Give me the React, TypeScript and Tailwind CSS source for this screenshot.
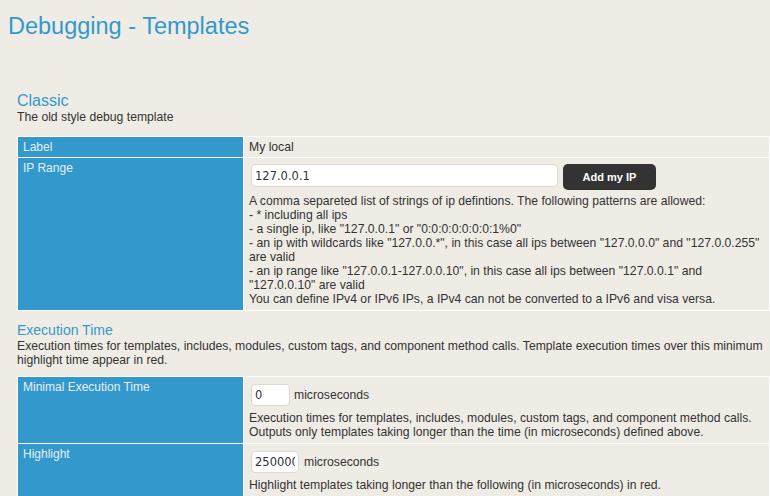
import React from "react";

const leftCell =
  "align-top bg-[#3399cc] text-[#e4f0f7] px-[5px] py-[3px] text-[12px] leading-[14px] font-normal text-left";
const rightCell =
  "align-top bg-[#efece6] px-[5px] py-[3px] text-[12.2px] leading-[14px] text-[#333]";
const inputCls =
  "block bg-white border border-[#dcd9d3] rounded-[4px] px-[3px] text-[11.5px] text-[#333] font-['DejaVu_Sans',sans-serif] outline-none";

export default function App() {
  return (
    <div className="w-[770px] h-[496px] overflow-hidden bg-[#efece6] font-['Liberation_Sans',Arial,sans-serif] text-[#333]">
      <h1 className="pt-[12px] pl-[8px] text-[23.5px] leading-[28px] text-[#3399cc]">
        Debugging - Templates
      </h1>
      <div className="pl-[17px] mt-[52px]">
        <h2 className="text-[16px] leading-[18px] text-[#3399cc]">Classic</h2>
        <p className="text-[12.2px] leading-[14px]">The old style debug template</p>
        <table className="mt-[12px] w-[753px] table-fixed border-separate border-spacing-[1px] bg-white">
          <colgroup>
            <col className="w-[225px]" />
            <col />
          </colgroup>
          <tbody>
            <tr>
              <th className={leftCell}>Label</th>
              <td className={rightCell}>My local</td>
            </tr>
            <tr>
              <th className={leftCell}>IP Range</th>
              <td className={rightCell + " pb-[4px]"}>
                <div className="flex items-start mt-[3px] ml-[2px]">
                  <input
                    className={inputCls + " w-[307px] h-[23px]"}
                    defaultValue="127.0.0.1"
                  />
                  <button className="ml-[5px] w-[93px] h-[26px] rounded-[5px] bg-[#333] text-white font-bold text-[11px]">
                    Add my IP
                  </button>
                </div>
                <div className="mt-[4px]">
                  A comma separeted list of strings of ip defintions. The following patterns are allowed:
                  <br />- * including all ips
                  <br />- a single ip, like "127.0.0.1" or "0:0:0:0:0:0:0:1%0"
                  <br />- an ip with wildcards like "127.0.0.*", in this case all ips between "127.0.0.0" and "127.0.0.255" are valid
                  <br />- an ip range like "127.0.0.1-127.0.0.10", in this case all ips between "127.0.0.1" and "127.0.0.10" are valid
                  <br />You can define IPv4 or IPv6 IPs, a IPv4 can not be converted to a IPv6 and visa versa.
                </div>
              </td>
            </tr>
          </tbody>
        </table>

        <h2 className="mt-[10px] text-[14px] leading-[18px] text-[#3399cc]">Execution Time</h2>
        <p className="text-[12.2px] leading-[14px] w-[753px]">
          Execution times for templates, includes, modules, custom tags, and component method calls. Template execution times over this minimum highlight time appear in red.
        </p>
        <table className="mt-[9px] w-[753px] table-fixed border-separate border-spacing-[1px] bg-white">
          <colgroup>
            <col className="w-[225px]" />
            <col />
          </colgroup>
          <tbody>
            <tr>
              <th className={leftCell}>Minimal Execution Time</th>
              <td className={rightCell + " pb-[4px]"}>
                <div className="flex items-center mt-[4px] ml-[2px]">
                  <input className={inputCls + " w-[39px] h-[22px]"} defaultValue="0" />
                  <span className="ml-[4px]">microseconds</span>
                </div>
                <div className="mt-[5px]">
                  Execution times for templates, includes, modules, custom tags, and component method calls.
                  <br />
                  Outputs only templates taking longer than the time (in microseconds) defined above.
                </div>
              </td>
            </tr>
            <tr>
              <th className={leftCell}>Highlight</th>
              <td className={rightCell + " pb-[4px]"}>
                <div className="flex items-center mt-[4px] ml-[2px]">
                  <input className={inputCls + " w-[48px] h-[22px]"} defaultValue="250000" />
                  <span className="ml-[5px]">microseconds</span>
                </div>
                <div className="mt-[5px]">
                  Highlight templates taking longer than the following (in microseconds) in red.
                </div>
              </td>
            </tr>
          </tbody>
        </table>
      </div>
    </div>
  );
}
